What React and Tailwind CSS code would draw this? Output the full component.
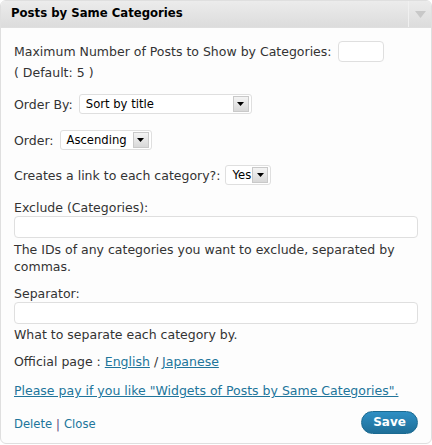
const FONT = { fontFamily: '"DejaVu Sans", Verdana, sans-serif' };

function Arrow() {
  return (
    <span className="flex h-[16px] w-[16px] items-center justify-center border border-[#c9c9c9] bg-gradient-to-b from-[#f4f4f4] to-[#d8d8d8]">
      <svg width="7" height="4" viewBox="0 0 7 4">
        <path d="M0 0h7L3.5 4z" fill="#000" />
      </svg>
    </span>
  );
}

function Select({ value, width, clip }) {
  return (
    <span
      className={`inline-flex h-[20px] items-center justify-between rounded-[3px] border border-[#dfdfdf] bg-white pl-[6px] pr-[2px] align-middle text-[11.6px] text-black ${width}`}
    >
      <span className={clip ? "w-[20px] overflow-hidden whitespace-nowrap" : "whitespace-nowrap"}>{value}</span>
      <Arrow />
    </span>
  );
}

function Field() {
  return <div className="h-[22px] w-full rounded-[4px] border border-[#dfdfdf] bg-white" />;
}

export default function App() {
  return (
    <div className="h-[445px] w-[432px] bg-white" style={FONT}>
      <div className="h-[444px] w-[432px] overflow-hidden rounded-[6px] border border-[#dfdfdf] bg-[#fdfdfd]">
        <div className="flex h-[27px] items-stretch border-b border-[#dfdfdf] bg-gradient-to-b from-[#ececec] to-[#dcdcdc]">
          <h3 className="flex flex-1 items-center pl-[10px] text-[11.7px] font-bold text-black">
            Posts by Same Categories
          </h3>
          <div className="flex w-[23px] items-center justify-center border-l border-[#f0f0f0]">
            <svg width="11" height="7" viewBox="0 0 11 7">
              <path d="M0 0h11L5.5 7z" fill="#c8c8c8" />
            </svg>
          </div>
        </div>

        <div className="px-[13px] pt-[13px] text-[12.5px] leading-[17px] text-[#333]">
          <p className="flex items-center gap-[6px]">
            <span>Maximum Number of Posts to Show by Categories:</span>
            <span className="h-[21px] w-[46px] rounded-[4px] border border-[#dfdfdf] bg-white" />
          </p>
          <p className="mt-[2px]">( Default: 5 )</p>

          <p className="mt-[13px] flex items-center gap-[6px]">
            <span>Order By:</span>
            <Select value="Sort by title" width="w-[173px]" />
          </p>

          <p className="mt-[16px] flex items-center gap-[6px]">
            <span>Order:</span>
            <Select value="Ascending" width="w-[92px]" />
          </p>

          <p className="mt-[15px] flex items-center gap-[5px]">
            <span>Creates a link to each category?:</span>
            <Select value="Yes" width="w-[46px]" clip />
          </p>

          <p className="mt-[14px]">Exclude (Categories):</p>
          <Field />
          <p className="mt-[3px]">The IDs of any categories you want to exclude, separated by commas.</p>

          <p className="mt-[10px]">Separator:</p>
          <Field />
          <p className="mt-[2px]">What to separate each category by.</p>

          <p className="mt-[10px]">
            Official page :{" "}
            <a href="#" className="text-[#21759b] underline">English</a> /{" "}
            <a href="#" className="text-[#21759b] underline">Japanese</a>
          </p>

          <p className="mt-[12px]">
            <a href="#" className="text-[#21759b] underline">
              Please pay if you like "Widgets of Posts by Same Categories".
            </a>
          </p>

          <div className="mt-[12px] flex items-center justify-between">
            <div className="pt-[4px] text-[11.6px]">
              <a href="#" className="text-[#21759b]">Delete</a>
              <span className="px-[4px] text-[#5b3f7a]">|</span>
              <a href="#" className="text-[#21759b]">Close</a>
            </div>
            <button
              type="button"
              className="h-[23px] w-[57px] rounded-full border border-[#1b6a91] bg-gradient-to-b from-[#2e8fc4] to-[#1f6f98] text-[12px] font-bold text-white"
            >
              Save
            </button>
          </div>
        </div>
      </div>
    </div>
  );
}
